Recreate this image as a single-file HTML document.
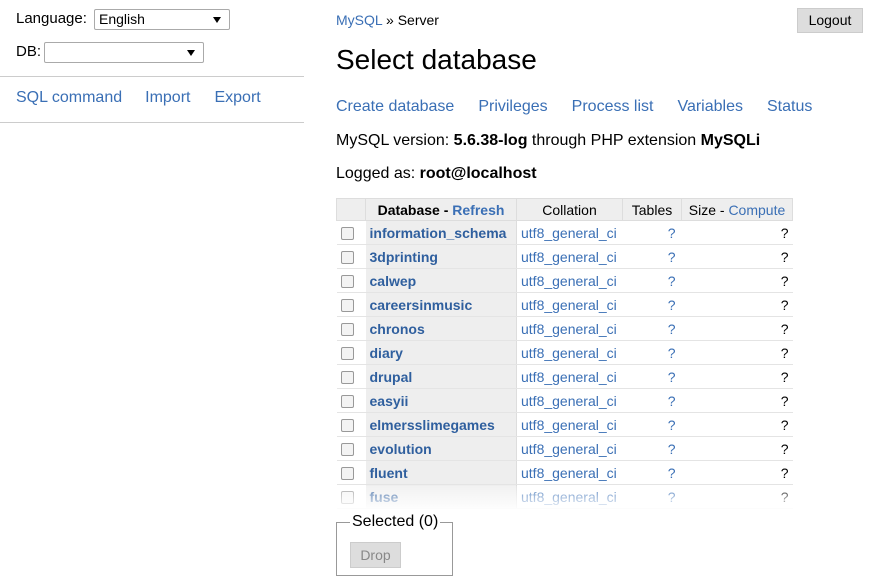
<!DOCTYPE html>
<html><head><style>
body{margin:0;width:881px;height:584px;background:#fff;font-family:"Liberation Sans",sans-serif;font-size:15px;color:#000;position:relative;overflow:hidden}
.a{position:absolute;white-space:nowrap}
a,.l{color:#3a6fb5;text-decoration:none}
.sel{position:absolute;border:1px solid #aaa;border-radius:2px;background:#fff;font-size:14px;box-sizing:border-box}
.sel:after{content:"";position:absolute;right:8px;top:7px;border-left:4px solid transparent;border-right:4px solid transparent;border-top:6px solid #000}
table{position:absolute;left:336px;top:198px;border-collapse:collapse;font-size:14px;table-layout:fixed;width:456px}
td,th{height:23px;padding:0 4px;border-bottom:1px solid #e4e4e4;white-space:nowrap;overflow:hidden;box-sizing:border-box}
tr{height:24px}
th{background:#eee;font-weight:normal;border:1px solid #ddd;height:22px}
tr.h{height:22px}
td.n{background:#eee;font-weight:bold;border-right:1px solid #ddd}
td.n a{color:#2f5f9e}
.cb{display:inline-block;width:11px;height:11px;border:1px solid #999;border-radius:2px;background:#f3f3f3;vertical-align:middle}
</style></head><body>
<div class="a" style="left:16px;top:10px">Language:</div>
<div class="sel" style="left:94px;top:9px;width:136px;height:21px;padding:1px 4px">English</div>
<div class="a" style="left:16px;top:43px">DB:</div>
<div class="sel" style="left:44px;top:42px;width:160px;height:21px"></div>
<div class="a" style="left:0;top:76px;width:304px;border-top:1px solid #ccc"></div>
<div class="a" style="left:16px;top:89px;font-size:16px"><a>SQL command</a><a style="margin-left:23px">Import</a><a style="margin-left:24px">Export</a></div>
<div class="a" style="left:0;top:122px;width:304px;border-top:1px solid #ccc"></div>

<div class="a" style="left:336px;top:12px;font-size:14px"><a>MySQL</a> » Server</div>
<div class="a" style="left:797px;top:8px;width:66px;height:25px;background:#ddd;border:1px solid #ccc;box-sizing:border-box;font-size:14px;text-align:center;line-height:23px">Logout</div>
<div class="a" style="left:336px;top:44px;font-size:28px">Select database</div>
<div class="a" style="left:336px;top:98px;font-size:16px"><a>Create database</a><a style="margin-left:24px">Privileges</a><a style="margin-left:24px">Process list</a><a style="margin-left:24px">Variables</a><a style="margin-left:24px">Status</a></div>
<div class="a" style="left:336px;top:132px;font-size:16px">MySQL version: <b>5.6.38-log</b> through PHP extension <b>MySQLi</b></div>
<div class="a" style="left:336px;top:165px;font-size:16px">Logged as: <b>root@localhost</b></div>

<table>
<colgroup><col style="width:29px"><col style="width:151px"><col style="width:106px"><col style="width:59px"><col style="width:111px"></colgroup>
<tr class="h"><th></th><th><b>Database - <a>Refresh</a></b></th><th>Collation</th><th>Tables</th><th>Size - <a>Compute</a></th></tr>
<tr><td><span class="cb"></span></td><td class="n"><a>information_schema</a></td><td class="l">utf8_general_ci</td><td class="l" style="text-align:right;padding-right:6px">?</td><td style="text-align:right">?</td></tr>
<tr><td><span class="cb"></span></td><td class="n"><a>3dprinting</a></td><td class="l">utf8_general_ci</td><td class="l" style="text-align:right;padding-right:6px">?</td><td style="text-align:right">?</td></tr>
<tr><td><span class="cb"></span></td><td class="n"><a>calwep</a></td><td class="l">utf8_general_ci</td><td class="l" style="text-align:right;padding-right:6px">?</td><td style="text-align:right">?</td></tr>
<tr><td><span class="cb"></span></td><td class="n"><a>careersinmusic</a></td><td class="l">utf8_general_ci</td><td class="l" style="text-align:right;padding-right:6px">?</td><td style="text-align:right">?</td></tr>
<tr><td><span class="cb"></span></td><td class="n"><a>chronos</a></td><td class="l">utf8_general_ci</td><td class="l" style="text-align:right;padding-right:6px">?</td><td style="text-align:right">?</td></tr>
<tr><td><span class="cb"></span></td><td class="n"><a>diary</a></td><td class="l">utf8_general_ci</td><td class="l" style="text-align:right;padding-right:6px">?</td><td style="text-align:right">?</td></tr>
<tr><td><span class="cb"></span></td><td class="n"><a>drupal</a></td><td class="l">utf8_general_ci</td><td class="l" style="text-align:right;padding-right:6px">?</td><td style="text-align:right">?</td></tr>
<tr><td><span class="cb"></span></td><td class="n"><a>easyii</a></td><td class="l">utf8_general_ci</td><td class="l" style="text-align:right;padding-right:6px">?</td><td style="text-align:right">?</td></tr>
<tr><td><span class="cb"></span></td><td class="n"><a>elmersslimegames</a></td><td class="l">utf8_general_ci</td><td class="l" style="text-align:right;padding-right:6px">?</td><td style="text-align:right">?</td></tr>
<tr><td><span class="cb"></span></td><td class="n"><a>evolution</a></td><td class="l">utf8_general_ci</td><td class="l" style="text-align:right;padding-right:6px">?</td><td style="text-align:right">?</td></tr>
<tr><td><span class="cb"></span></td><td class="n"><a>fluent</a></td><td class="l">utf8_general_ci</td><td class="l" style="text-align:right;padding-right:6px">?</td><td style="text-align:right">?</td></tr>
<tr><td><span class="cb"></span></td><td class="n"><a>fuse</a></td><td class="l">utf8_general_ci</td><td class="l" style="text-align:right;padding-right:6px">?</td><td style="text-align:right">?</td></tr>
</table>
<div class="a" style="left:330px;top:486px;width:470px;height:26px;background:linear-gradient(rgba(255,255,255,0.2),#fff)"></div>

<div class="a" style="left:336px;top:522px;width:117px;height:54px;border:1px solid #999;box-sizing:border-box"></div>
<div class="a" style="left:350px;top:513px;background:#fff;padding:0 2px;font-size:16px">Selected (0)</div>
<div class="a" style="left:350px;top:542px;width:51px;height:26px;background:#ddd;border:1px solid #ccc;box-sizing:border-box;color:#888;font-size:14px;text-align:center;line-height:24px">Drop</div>
</body></html>
